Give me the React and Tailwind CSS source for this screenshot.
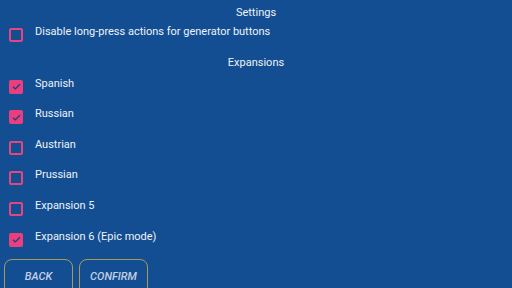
const ROWS = [
  { label: 'Spanish', on: true },
  { label: 'Russian', on: true },
  { label: 'Austrian', on: false },
  { label: 'Prussian', on: false },
  { label: 'Expansion 5', on: false },
  { label: 'Expansion 6 (Epic mode)', on: true },
]

function Box({ on }) {
  if (!on) return <span className="block w-[14px] h-[14px] rounded-[2px] border-2 border-[#e8457f] shrink-0" />
  return (
    <span className="flex items-center justify-center w-[14px] h-[14px] rounded-[2px] bg-[#ea3f7e] shrink-0">
      <svg viewBox="0 0 12 12" className="w-[11px] h-[11px]">
        <path d="M2.2 6.2l2.5 2.4 5-5" fill="none" stroke="#1b3f7a" strokeWidth="1.4" />
      </svg>
    </span>
  )
}

function Row({ label, on }) {
  return (
    <div className="flex items-start h-[30.6px] pl-[9px]">
      <div className="pt-[3px]"><Box on={on} /></div>
      <span className="ml-[12px] text-[11px] leading-[13px] text-[#eef2f8]">{label}</span>
    </div>
  )
}

export default function App() {
  return (
    <div className="w-[512px] h-[288px] overflow-hidden bg-[#134e93] font-['Roboto',sans-serif] flex flex-col">
      <div className="text-center text-[11px] leading-[13px] text-[#eef2f8] mt-[5.5px]">Settings</div>
      <div className="mt-[6.5px]"><Row label="Disable long-press actions for generator buttons" on={false} /></div>
      <div className="text-center text-[11px] leading-[13px] text-[#eef2f8]">Expansions</div>
      <div className="mt-[8px] flex flex-col">
        {ROWS.map(r => <Row key={r.label} {...r} />)}
      </div>
      <div className="flex gap-[6px] pl-[4px] mt-[-1.5px]">
        {['BACK', 'CONFIRM'].map(b => (
          <div key={b} className="w-[69px] h-[40px] rounded-[8px] border border-[#a89a5c] flex justify-center pt-[10.5px]">
            <span className="text-[11px] leading-[13px] italic font-medium text-[#c3cfe4]">{b}</span>
          </div>
        ))}
      </div>
    </div>
  )
}
